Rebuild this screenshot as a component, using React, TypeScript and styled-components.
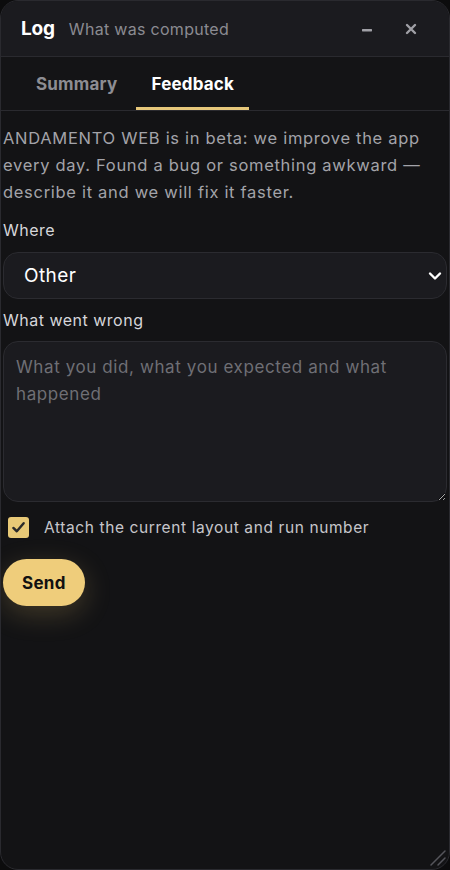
import { useState } from "react";
import styled, { createGlobalStyle } from "styled-components";

const GlobalStyle = createGlobalStyle`
    html, body {margin: 0; padding: 0; background: #0c0c0d;}
    body {font-family: Inter, "Noto Sans", sans-serif; color: #e6e6ea;}
    * {box-sizing: border-box;}
`;

const Panel = styled.div`
    width: 450px; height: 870px; display: flex; flex-direction: column;
    background: #131315; border: 1px solid #2a2a2f; border-radius: 18px;
    overflow: hidden; position: relative;
`;
const Header = styled.header`
    height: 56px; flex: none; display: flex; align-items: center; padding: 0 24px 0 20px;
    background: #1b1b1f; border-bottom: 1px solid #2a2a2f;
`;
const Title = styled.h1`
    margin: 0; font-size: 19px; font-weight: 700; color: #fff; letter-spacing: -0.2px;
`;
const Subtitle = styled.span`
    margin-left: 14px; font-size: 16px; letter-spacing: 0.3px; color: #8b8b92; flex: 1;
`;
const HeadBtn = styled.button<{ $gap?: number }>`
    width: 28px; height: 28px; border: 0; padding: 0; background: none; color: #a0a0a6;
    display: flex; align-items: center; justify-content: center; margin-left: ${p => p.$gap ?? 0}px;
`;
const Tabs = styled.nav`
    height: 54px; flex: none; display: flex; gap: 4px; padding-left: 20px; border-bottom: 1px solid #2a2a2f; background: #141416;
`;
const Tab = styled.button<{ $active?: boolean }>`
    border: 0; background: none; padding: 3px 15px 0; font: inherit; font-size: 17px; font-weight: 700;
    letter-spacing: 0.2px;
    color: ${p => (p.$active ? "#fff" : "#8d8d93")};
    border-bottom: 3px solid ${p => (p.$active ? "#e6c77a" : "transparent")};
`;
const Body = styled.div`
    flex: 1; display: flex; flex-direction: column; padding: 14px 2px 0 2px;
`;
const Intro = styled.p`
    margin: 0 0 14px; font-size: 16.5px; letter-spacing: 0.7px; line-height: 27px; color: #a3a3a9;
`;
const Label = styled.label`
    font-size: 16px; letter-spacing: 0.5px; color: #d6d6da; margin-bottom: 12px; line-height: 20px;
`;
const SelectWrap = styled.div`
    position: relative; margin-bottom: 11px;
`;
const Select = styled.select`
    appearance: none; width: 100%; height: 47px; border-radius: 15px; border: 1px solid #2b2b30;
    background: #1b1b1f; color: #fff; font: inherit; font-size: 19px; letter-spacing: 0.4px; padding: 0 20px; outline: none;
`;
const Chevron = styled.svg`
    position: absolute; right: 4px; top: 50%; transform: translateY(-50%); pointer-events: none;
`;
const TextArea = styled.textarea`
    width: 100%; height: 161px; border-radius: 15px; border: 1px solid #2b2b30; background: #1b1b1f;
    color: #fff; font: inherit; font-size: 17px; letter-spacing: 0.6px; line-height: 27px; padding: 12px 12px; resize: vertical; outline: none;
    margin-top: -1px; margin-bottom: 15px;
    &::placeholder {color: #6f6f75;}
`;
const CheckRow = styled.label`
    display: flex; align-items: center; gap: 15px; padding-left: 5px; font-size: 15.5px; letter-spacing: 0.6px; color: #c6c6cb;
    margin-bottom: 21px;
`;
const Box = styled.span`
    width: 21px; height: 21px; border-radius: 3px; background: #e8c977; display: flex;
    align-items: center; justify-content: center;
`;
const SendBtn = styled.button`
    align-self: flex-start; height: 47px; padding: 0 19px; border: 0; border-radius: 24px;
    background: #efcd7b; color: #111; font: inherit; font-size: 17px; font-weight: 700; letter-spacing: 0.3px;
    box-shadow: 0 8px 28px rgba(232, 196, 110, 0.22);
`;
const Grip = styled.svg`
    position: absolute; right: 2px; bottom: 2px;
`;

export default function App() {
    const [tab, setTab] = useState("feedback");
    return (
        <>
            <GlobalStyle />
            <Panel>
                <Header>
                    <Title>Log</Title>
                    <Subtitle>What was computed</Subtitle>
                    <HeadBtn aria-label="minimize">
                        <svg width="12" height="12" viewBox="0 0 12 12"><rect x="1" y="6" width="10" height="2.4" rx="0.6" fill="currentColor" /></svg>
                    </HeadBtn>
                    <HeadBtn aria-label="close" $gap={16}>
                        <svg width="12" height="12" viewBox="0 0 12 12"><path d="M2 2 L10 10 M10 2 L2 10" stroke="currentColor" strokeWidth="2.4" strokeLinecap="round" /></svg>
                    </HeadBtn>
                </Header>
                <Tabs>
                    <Tab $active={tab === "summary"} onClick={() => setTab("summary")}>Summary</Tab>
                    <Tab $active={tab === "feedback"} onClick={() => setTab("feedback")}>Feedback</Tab>
                </Tabs>
                <Body>
                    <Intro>ANDAMENTO WEB is in beta: we improve the app every day. Found a bug or something awkward — describe it and we will fix it faster.</Intro>
                    <Label>Where</Label>
                    <SelectWrap>
                        <Select defaultValue="other">
                            <option value="other">Other</option>
                        </Select>
                        <Chevron width="16" height="16" viewBox="0 0 16 16"><path d="M3 5.5 L8 10.5 L13 5.5" fill="none" stroke="#fff" strokeWidth="2.4" strokeLinecap="round" strokeLinejoin="round" /></Chevron>
                    </SelectWrap>
                    <Label>What went wrong</Label>
                    <TextArea placeholder="What you did, what you expected and what happened" />
                    <CheckRow>
                        <Box>
                            <svg width="15" height="15" viewBox="0 0 16 16"><path d="M2.5 8.5 L6.2 12 L13.5 3.5" fill="none" stroke="#2a2a2a" strokeWidth="2.6" strokeLinecap="round" strokeLinejoin="round" /></svg>
                        </Box>
                        Attach the current layout and run number
                    </CheckRow>
                    <SendBtn>Send</SendBtn>
                </Body>
                <Grip width="22" height="22" viewBox="0 0 22 22"><path d="M20 6 L6 20 M20 13 L13 20" stroke="#55555b" strokeWidth="1.5" strokeLinecap="round" /></Grip>
            </Panel>
        </>
    );
}
